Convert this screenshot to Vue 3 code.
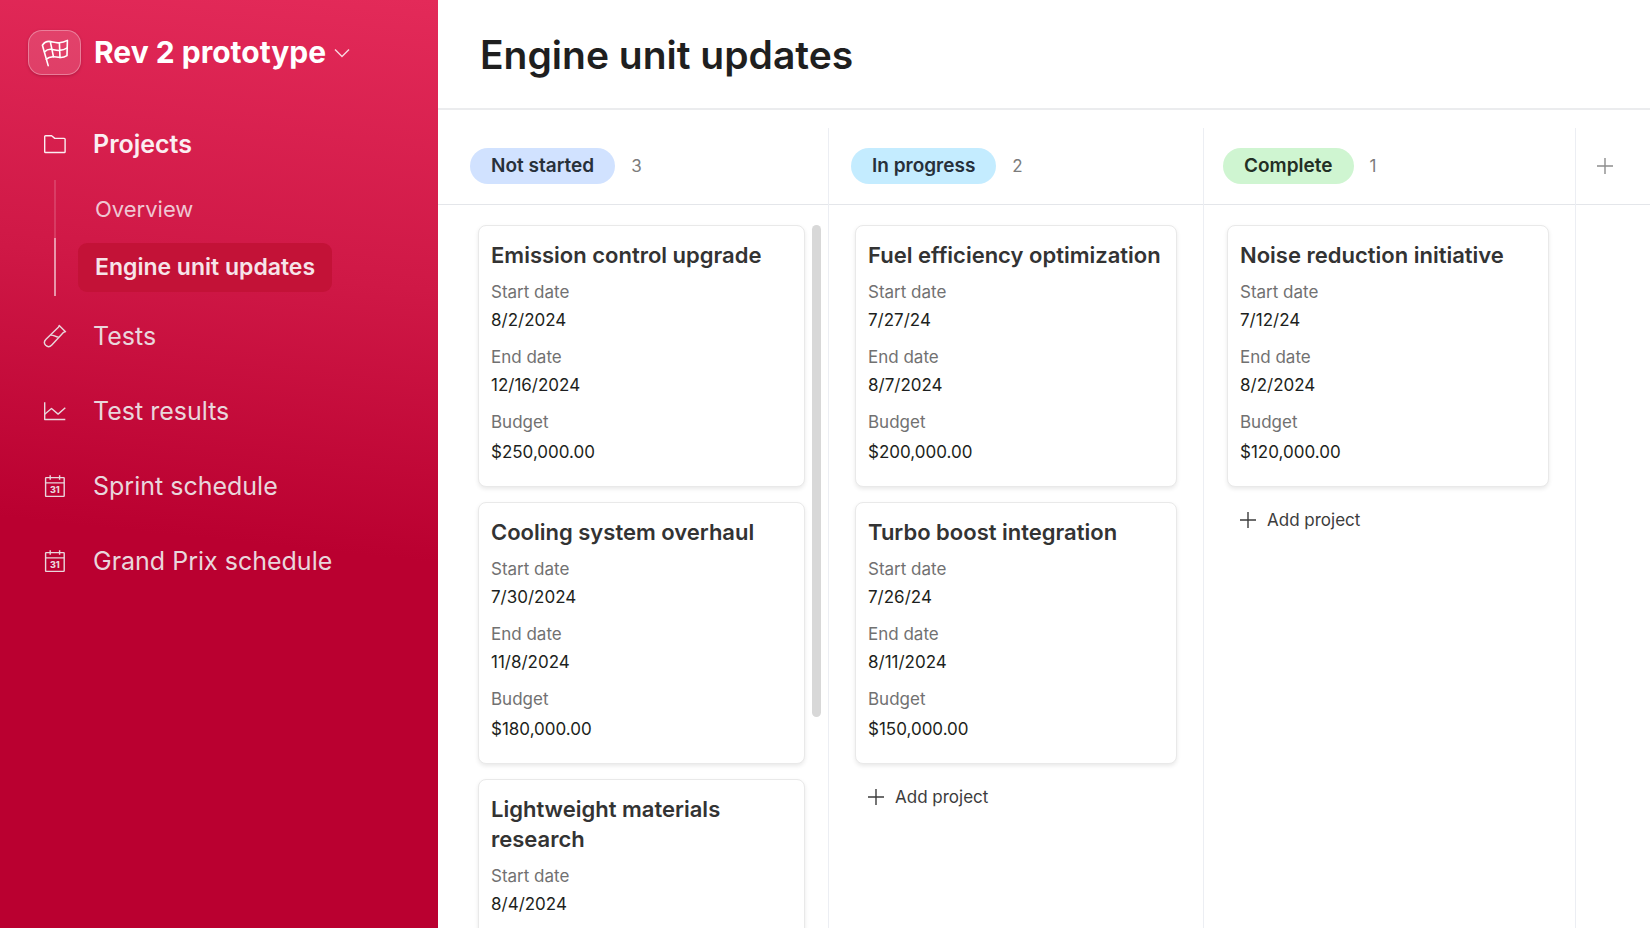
<script setup>
const columns = [
  {
    key: 'not-started',
    label: 'Not started',
    scrolls: true,
    cards: [
      { title: 'Emission control upgrade', start: '8/2/2024', end: '12/16/2024', budget: '$250,000.00' },
      { title: 'Cooling system overhaul', start: '7/30/2024', end: '11/8/2024', budget: '$180,000.00' },
      { title: 'Lightweight materials research', start: '8/4/2024' },
    ],
  },
  {
    key: 'in-progress',
    label: 'In progress',
    cards: [
      { title: 'Fuel efficiency optimization', start: '7/27/24', end: '8/7/2024', budget: '$200,000.00' },
      { title: 'Turbo boost integration', start: '7/26/24', end: '8/11/2024', budget: '$150,000.00' },
    ],
  },
  {
    key: 'complete',
    label: 'Complete',
    cards: [
      { title: 'Noise reduction initiative', start: '7/12/24', end: '8/2/2024', budget: '$120,000.00' },
    ],
  },
]

const links = [
  { label: 'Tests', icon: 'tube' },
  { label: 'Test results', icon: 'chart' },
  { label: 'Sprint schedule', icon: 'calendar' },
  { label: 'Grand Prix schedule', icon: 'calendar' },
]
</script>

<template>
  <div class="app">
    <aside class="sidebar">
      <button class="brand" type="button">
        <span class="badge">
          <svg width="28" height="28" viewBox="0 0 28 28" aria-hidden="true">
            <path d="M7.200 26.600 1.400 6.200C3.800 2.700 6.600 2 9.800 2.600c3.200.7 5.200 1.500 8.400 1.200 3-.3 5.800-1.200 8.200-2.400l-.4 15.200c-2.400 1.500-4.800 2.100-7.300 1.800-2.600-.4-4.400-.8-6.700-.6-2.700.2-5 .9-6.900 2.500" />
            <path d="M3.500 12.800c2.100-2 4.500-2.800 7.200-2.400 2.800.5 5 1.200 7.800 1 2.800-.2 5.300-.9 7.700-2.500M9.300 2.700l3.200 15.100M18.400 3.700l.6 14.800" />
          </svg>
        </span>
        <span class="brand-name">Rev 2 prototype</span>
        <svg class="chevron" width="16" height="10" viewBox="0 0 16 10" aria-hidden="true">
          <path d="M1 1.500 8 8.500 15 1.500" />
        </svg>
      </button>

      <nav>
        <a class="nav-link current" href="#">
          <svg class="nav-icon" width="24" height="24" viewBox="0 0 24 24" aria-hidden="true">
            <path d="M1.700 19.700V4.600c0-.5.3-.8.800-.8h6.100l3.200 2.600h9.400c.6 0 .9.300.9.800v12.500c0 .5-.3.800-.8.800H2.500c-.5 0-.8-.3-.8-.8z" />
          </svg>
          <span>Projects</span>
        </a>
        <ul class="sub">
          <li><a href="#">Overview</a></li>
          <li class="selected"><a href="#" aria-current="page">Engine unit updates</a></li>
        </ul>
        <a v-for="link in links" :key="link.label" class="nav-link" href="#">
          <svg class="nav-icon" width="24" height="24" viewBox="0 0 24 24" aria-hidden="true">
            <g v-if="link.icon === 'tube'">
              <path d="M16.200 1.500l6.300 6.200-1.900.6L8.800 21c-1.800 1.900-4.300 2-6.100.3-1.700-1.800-1.500-4.300.3-6.100L15.600 3.100z" />
              <path d="M7.700 11.200c3.300-.6 3.900 1.900 8 1.900" />
            </g>
            <g v-else-if="link.icon === 'chart'">
              <path d="M1.700 3.200v17.300h20.600" />
              <path d="M1.700 15.300 8.500 9.500l6.600 5.600 7.200-6.300" />
            </g>
            <g v-else>
              <rect x="2.600" y="3.600" width="18.600" height="18.800" rx=".6" />
              <path d="M2.600 8.900h18.600M7.200 1.200v4.500M16.600 1.200v4.500" />
              <text x="11.900" y="18.800">31</text>
            </g>
          </svg>
          <span>{{ link.label }}</span>
        </a>
      </nav>
    </aside>

    <main class="main">
      <header class="page-head">
        <h1>Engine unit updates</h1>
      </header>

      <div class="board">
        <section v-for="col in columns" :key="col.key" class="column" :class="col.key">
          <header class="col-head">
            <h2 class="status">{{ col.label }}</h2>
            <span class="count">{{ col.cards.length }}</span>
          </header>
          <div class="col-body">
            <div class="stack">
              <article v-for="card in col.cards" :key="card.title" class="card">
                <h3>{{ card.title }}</h3>
                <dl>
                  <div>
                    <dt>Start date</dt>
                    <dd>{{ card.start }}</dd>
                  </div>
                  <div v-if="card.end">
                    <dt>End date</dt>
                    <dd>{{ card.end }}</dd>
                  </div>
                  <div v-if="card.budget">
                    <dt>Budget</dt>
                    <dd class="money">{{ card.budget }}</dd>
                  </div>
                </dl>
              </article>
              <button v-if="!col.scrolls" class="add" type="button">
                <svg class="plus" width="16" height="16" viewBox="0 0 16 16" aria-hidden="true">
                  <path d="M8 0v16M0 8h16" />
                </svg>
                Add project
              </button>
            </div>
            <div v-if="col.scrolls" class="scrollbar"></div>
          </div>
        </section>

        <section class="column extra">
          <header class="col-head">
            <button class="add-column" type="button" aria-label="Add column">
              <svg class="plus" width="16" height="16" viewBox="0 0 16 16" aria-hidden="true">
                <path d="M8 0v16M0 8h16" />
              </svg>
            </button>
          </header>
        </section>
      </div>
    </main>
  </div>
</template>

<style>
body {
  margin: 0;
}
</style>

<style scoped>
.app {
  display: flex;
  height: 100vh;
  overflow: hidden;
  font-family: Inter, "Liberation Sans", sans-serif;
  background: #fff;
  color: #1d1f20;
}
button {
  border: 0;
  padding: 0;
  background: none;
  font: inherit;
  color: inherit;
  cursor: pointer;
}
svg {
  flex: none;
  fill: none;
  stroke: currentColor;
}
h1,
h2,
h3,
dl,
dd,
ul {
  margin: 0;
  padding: 0;
}

/* Sidebar */
.sidebar {
  flex: none;
  box-sizing: border-box;
  width: 438px;
  background: linear-gradient(186deg, #e32a59 0, #cf1846 290px, #ba0030 560px);
}
.brand {
  display: flex;
  align-items: center;
  padding: 30px 28px 31px;
  color: #fff;
}
.badge {
  display: flex;
  align-items: center;
  justify-content: center;
  box-sizing: border-box;
  width: 53px;
  height: 45px;
  margin-right: 13px;
  border: 1px solid rgba(255, 255, 255, 0.32);
  border-radius: 14px;
  background: rgba(255, 255, 255, 0.13);
  box-shadow: 0 1px 3px rgba(90, 0, 30, 0.3);
}
.badge svg {
  stroke-width: 1.6;
  stroke-linejoin: round;
  stroke-linecap: round;
}
.brand-name {
  font-size: 30px;
  font-weight: 700;
  line-height: 45px;
}
.chevron {
  margin-left: 8px;
  stroke-width: 1.5;
  opacity: 0.8;
}
.nav-link {
  display: flex;
  align-items: center;
  gap: 26px;
  height: 75px;
  padding-left: 43px;
  font-size: 25px;
  color: #e9d6dc;
  text-decoration: none;
}
.nav-link.current {
  font-weight: 600;
  color: #fbeef2;
}
.nav-icon {
  stroke-width: 1.4;
  stroke-linejoin: round;
}
.nav-icon text {
  fill: currentColor;
  stroke: none;
  font-size: 9px;
  font-weight: 800;
  text-anchor: middle;
}
.sub {
  margin: -1px 0 2px 54px;
  list-style: none;
}
.sub li {
  display: flex;
  align-items: center;
  height: 58px;
  padding-left: 22px;
  border-left: 2px solid rgba(255, 255, 255, 0.15);
}
.sub a {
  padding: 0 17px;
  border-radius: 9px;
  font-size: 22px;
  line-height: 49px;
  color: #efc6d2;
  text-decoration: none;
}
.sub .selected {
  border-color: rgba(255, 255, 255, 0.55);
}
.sub .selected a {
  background: #c31237;
  font-size: 23px;
  font-weight: 600;
  color: #f6e4e9;
}

/* Main area */
.main {
  flex: 1;
  display: flex;
  flex-direction: column;
  min-width: 0;
}
.page-head {
  padding: 29px 42px 27px;
  border-bottom: 2px solid #ebecee;
}
h1 {
  font-size: 39px;
  font-weight: 600;
  line-height: 52px;
  color: #1f1f1f;
}
.board {
  flex: 1;
  display: grid;
  grid-template-columns: 391fr 375fr 372fr 74fr;
  min-height: 0;
  padding-top: 18px;
}
.column {
  display: flex;
  flex-direction: column;
  min-width: 0;
  min-height: 0;
  border-right: 1px solid #eceef3;
}
.column.extra {
  border-right: 0;
}
.col-head {
  display: flex;
  align-items: center;
  gap: 16px;
  height: 76px;
  border-bottom: 1px solid #e4e6ea;
}
.status {
  padding: 0 21px;
  border-radius: 18px;
  font-size: 19px;
  font-weight: 600;
  line-height: 36px;
  white-space: nowrap;
  color: #27303a;
}
.count {
  font-size: 17px;
  color: #7c7c7c;
}
.not-started .col-head {
  padding-left: 32px;
}
.not-started .status {
  background: #d1e2ff;
}
.in-progress .col-head {
  padding-left: 22px;
}
.in-progress .status {
  background: #c4ecff;
}
.complete .col-head {
  padding-left: 19px;
}
.complete .status {
  background: #cff5d1;
  color: #232f25;
}
.extra .col-head {
  padding-left: 13px;
}
.add-column {
  display: flex;
  padding: 8px;
  color: #8d8d8d;
}
.plus {
  stroke-width: 1.4;
}
.col-body {
  flex: 1;
  display: flex;
  gap: 7px;
  min-height: 0;
  overflow: hidden;
  padding: 20px 26px 0;
}
.not-started .col-body {
  padding: 20px 7px 0 40px;
}
.complete .col-body {
  padding: 20px 26px 0 23px;
}
.stack {
  flex: 1;
  min-width: 0;
}
.card {
  box-sizing: border-box;
  min-height: 262px;
  margin-bottom: 15px;
  padding: 14px 12px 19px;
  border: 1px solid #e9e9e9;
  border-radius: 8px;
  background: #fff;
  box-shadow: 0 2px 4px rgba(0, 0, 0, 0.09);
}
h3 {
  margin-bottom: 9px;
  font-size: 22px;
  font-weight: 600;
  line-height: 30px;
  color: #333;
}
dl {
  display: grid;
  gap: 9px;
}
dt {
  font-size: 17px;
  line-height: 26px;
  color: #717171;
}
dd {
  font-size: 17px;
  line-height: 30px;
}
dd.money {
  margin-top: 2px;
}
.add {
  display: flex;
  align-items: center;
  gap: 11px;
  padding: 4px 13px;
  font-size: 17px;
  line-height: 28px;
  color: #3c3c3c;
}
.scrollbar {
  flex: none;
  width: 9px;
  height: 70%;
  border-radius: 5px;
  background: #d8d8d8;
}
</style>
